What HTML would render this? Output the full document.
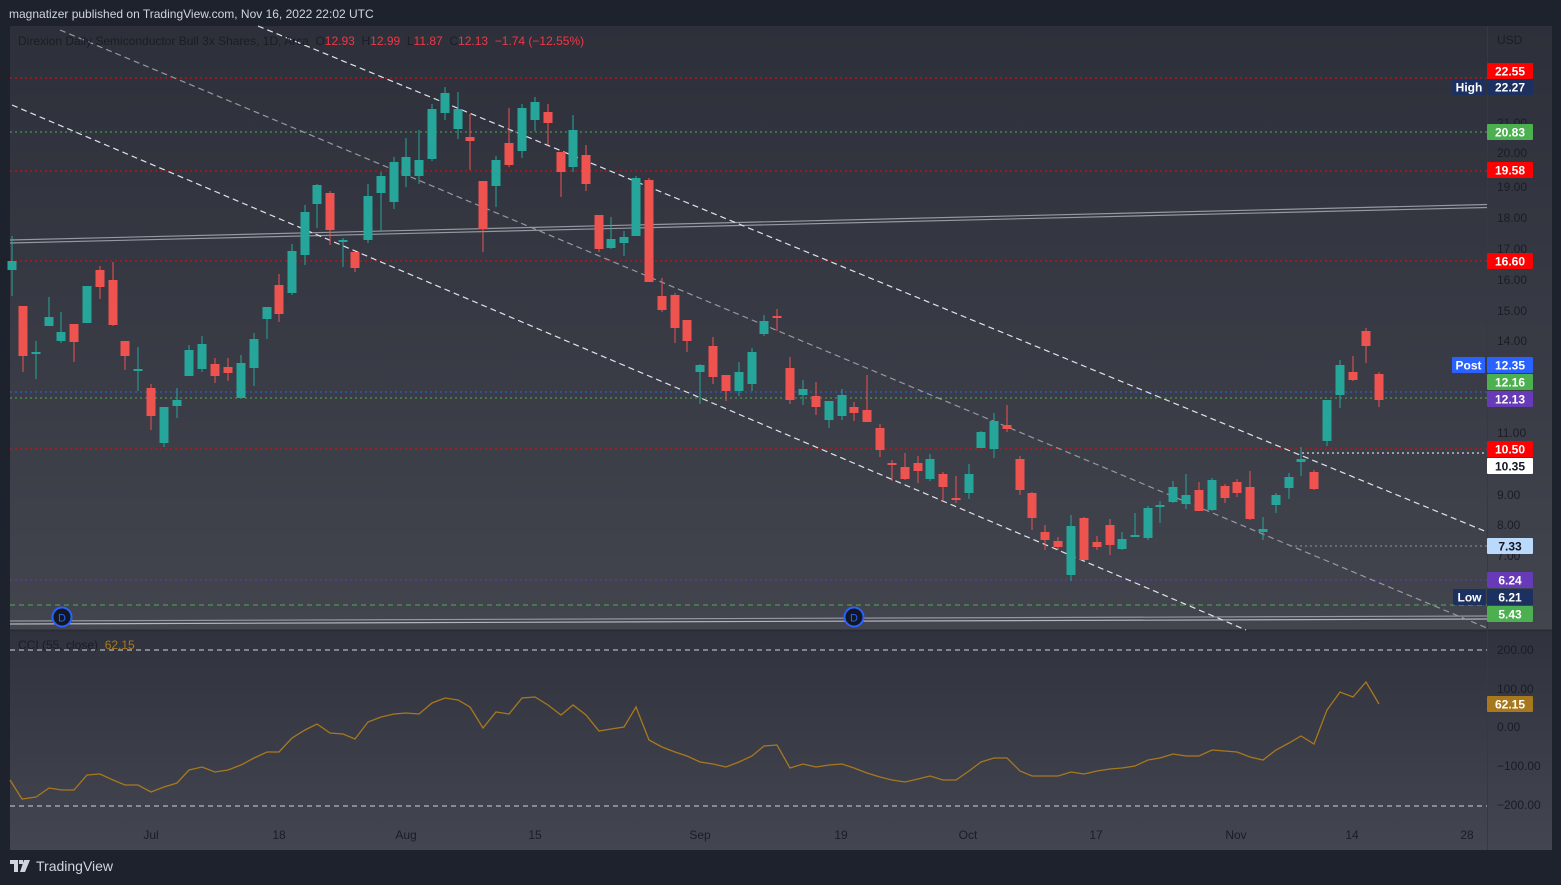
<!DOCTYPE html>
<html><head><meta charset="utf-8"><style>
*{margin:0;padding:0}
body{width:1561px;height:885px;background:#1e222d;overflow:hidden;font-family:"Liberation Sans",sans-serif;position:relative}
#hdr{position:absolute;left:9px;top:7px;color:#d1d4dc;font-size:12px}
#foot{position:absolute;left:10px;top:858px;color:#d1d4dc;font-size:14px;display:flex;align-items:center;gap:4px}
svg{position:absolute;left:0;top:0}
</style></head><body>
<div id="hdr">magnatizer published on TradingView.com, Nov 16, 2022 22:02 UTC</div>
<div id="foot"><svg style="position:static" width="22" height="12" viewBox="0 0 22 12"><path d="M0 0h8v12h-4V4H0z M9 0h4v4h-4z M14 0h6l-5 12h-5z" fill="#d1d4dc"/></svg>TradingView</div>
<svg id="c" width="1561" height="885" xmlns="http://www.w3.org/2000/svg">
<defs>
<linearGradient id="g1" x1="0" y1="0" x2="0" y2="1"><stop offset="0" stop-color="#2d303a"/><stop offset="1" stop-color="#42444e"/></linearGradient>
<linearGradient id="g2" x1="0" y1="0" x2="0" y2="1"><stop offset="0" stop-color="#30333d"/><stop offset="1" stop-color="#434550"/></linearGradient>
</defs>
<rect x="10" y="26" width="1542" height="605" fill="url(#g1)"/>
<rect x="10" y="631" width="1542" height="219" fill="url(#g2)"/>
<line x1="10" y1="630.5" x2="1552" y2="630.5" stroke="#2a2d36" stroke-width="2"/>
<line x1="1487.5" y1="26" x2="1487.5" y2="850" stroke="#363944" stroke-width="1"/>
<g id="lv"></g>
<g id="cd"></g>
<g id="lb" font-family="Liberation Sans,sans-serif" font-size="12"></g>
</svg>
<script>
const NS="http://www.w3.org/2000/svg";
function el(p,t,a,txt){const e=document.createElementNS(NS,t);for(const k in a)e.setAttribute(k,a[k]);if(txt!==undefined)e.textContent=txt;document.getElementById(p).appendChild(e);return e;}
[[78,'#f00',10,1487,'2 3'],[132,'#4caf50',10,1487,'2 3'],[171,'#f00',10,1487,'2 3'],[261,'#f00',10,1487,'2 3'],[392,'#2962ff',10,1487,'2 3'],[398,'#4caf50',10,1487,'2 3'],[449,'#f00',10,1487,'2 3'],[453,'#fff',1302,1487,'2 3'],[546,'#8a93a6',1290,1487,'2 3'],[580,'#673ab7',10,1487,'2 3'],[605,'#4caf50',10,1487,'5 4']].forEach(l=>el('lv','line',{x1:l[2],y1:l[0],x2:l[3],y2:l[0],stroke:l[1],'stroke-width':1,'stroke-dasharray':l[4]}));
el('lv','line',{x1:10,y1:240,x2:1487,y2:204.5,stroke:'#9598a1','stroke-width':1.2});
el('lv','line',{x1:10,y1:243,x2:1487,y2:207.5,stroke:'#9598a1','stroke-width':1.2});
el('lv','line',{x1:10,y1:621,x2:1487,y2:616,stroke:'#9598a1','stroke-width':1.2});
el('lv','line',{x1:10,y1:624,x2:1487,y2:619,stroke:'#b2b5be','stroke-width':1.2});
el('lv','line',{x1:258,y1:26,x2:1487,y2:532,stroke:'#e0e3eb','stroke-width':1.2,'stroke-dasharray':'6 4'});
el('lv','line',{x1:60,y1:30,x2:1487,y2:628,stroke:'#9598a1','stroke-width':1.2,'stroke-dasharray':'6 4'});
el('lv','line',{x1:12,y1:105,x2:1246,y2:630,stroke:'#e0e3eb','stroke-width':1.2,'stroke-dasharray':'6 4'});
const C=[[12,261,270,236,296,'g'],[23,306,356,306,372,'r'],[36,352,354,341,379,'g'],[49,317,326,297,326,'g'],[61,332,341,312,343,'g'],[74,324,342,324,362,'r'],[87,286,323,286,323,'g'],[100,270,287,266,299,'r'],[113,280,325,262,326,'r'],[125,341,356,341,370,'r'],[138,369,371,347,391,'g'],[151,388,416,384,430,'r'],[164,407,443,407,447,'g'],[177,400,406,388,418,'g'],[189,350,376,345,376,'g'],[202,344,369,336,372,'g'],[215,364,376,358,383,'r'],[228,367,373,358,381,'r'],[241,363,398,355,398,'g'],[254,339,368,333,386,'g'],[267,307,319,307,339,'g'],[279,285,314,274,322,'r'],[292,251,293,244,295,'g'],[305,212,255,205,265,'g'],[317,185,204,184,228,'g'],[330,193,230,191,245,'r'],[343,240,242,238,267,'g'],[355,252,268,252,272,'r'],
[368,196,240,184,243,'g'],[381,176,193,172,232,'g'],[394,162,202,157,209,'g'],[406,157,176,138,187,'g'],[419,160,176,130,184,'g'],[432,109,159,104,161,'g'],[445,93,113,87,120,'g'],[458,109,129,92,139,'g'],[470,137,141,114,170,'r'],[483,181,229,181,252,'r'],[496,160,186,156,207,'g'],[509,143,165,108,167,'r'],[522,108,151,104,158,'g'],[535,102,120,97,131,'g'],[548,112,123,104,145,'r'],[561,152,172,152,197,'r'],[573,130,167,115,172,'g'],[586,155,184,145,191,'r'],[599,215,249,215,252,'r'],[611,239,248,217,249,'g'],[624,237,243,231,256,'g'],[636,178,236,176,236,'g'],[649,180,282,178,282,'r'],[662,296,310,278,312,'r'],[675,295,328,293,343,'r'],[687,320,341,320,352,'r'],
[700,365,372,364,404,'g'],[713,346,377,337,384,'r'],[726,375,391,375,401,'r'],[739,372,391,362,396,'g'],[752,352,384,348,391,'g'],[764,321,334,315,336,'g'],[777,316,318,309,331,'r'],[790,368,400,357,404,'r'],[803,389,395,380,405,'g'],[816,396,407,382,415,'r'],[829,401,420,401,428,'g'],[842,395,416,389,420,'g'],[854,407,413,402,421,'r'],[867,410,422,375,422,'r'],[880,428,450,424,457,'r'],[892,463,464,460,481,'r'],[905,467,479,453,480,'r'],[918,463,471,456,483,'r'],[930,459,479,454,481,'g'],[943,474,487,472,501,'r'],[956,498,500,476,503,'r'],[969,474,493,464,499,'g'],[981,432,448,431,448,'g'],[994,421,449,413,458,'g'],[1007,425,429,405,432,'r'],[1020,459,490,456,495,'r'],[1032,493,518,492,530,'r'],[1045,532,540,525,550,'r'],
[1058,541,547,537,550,'r'],[1071,526,575,515,581,'g'],[1084,518,560,517,560,'r'],[1097,542,547,536,550,'r'],[1110,525,545,519,555,'r'],[1122,539,549,532,550,'g'],[1135,535,537,513,537,'g'],[1148,508,538,506,540,'g'],[1160,505,507,501,523,'g'],[1173,487,502,481,503,'g'],[1186,495,504,474,509,'g'],[1199,490,511,482,511,'r'],[1212,480,510,478,511,'g'],[1225,486,498,484,503,'r'],[1237,482,493,479,497,'r'],[1250,487,519,471,520,'r'],[1263,529,532,517,540,'g'],[1276,495,505,493,513,'g'],[1289,477,488,473,499,'g'],[1301,459,462,447,476,'g'],[1314,472,489,470,490,'r'],[1327,400,441,400,446,'g'],[1340,365,395,360,408,'g'],[1353,372,380,356,381,'r'],[1366,331,346,328,363,'r'],[1379,374,400,372,407,'r']];
C.forEach(c=>{const col=c[5]=='g'?'#26a69a':'#ef5350';el('cd','line',{x1:c[0],y1:c[3],x2:c[0],y2:c[4],stroke:col,'stroke-width':1});el('cd','rect',{x:c[0]-4.5,y:c[1],width:9,height:Math.max(2,c[2]-c[1]),fill:col});});
[62,854].forEach(x=>{el('cd','circle',{cx:x,cy:617,r:9.5,fill:'#131722',stroke:'#2962ff','stroke-width':2});el('lb','text',{x:x,y:621.5,'text-anchor':'middle',fill:'#2962ff','font-size':11},'D');});
el('cd','line',{x1:10,y1:650,x2:1487,y2:650,stroke:'#d1d4dc','stroke-width':1,'stroke-dasharray':'5 4'});
el('cd','line',{x1:10,y1:806,x2:1487,y2:806,stroke:'#d1d4dc','stroke-width':1,'stroke-dasharray':'5 4'});
const P=[[10,780],[22,799],[36,797],[49,788],[62,790],[74,790],[87,775],[100,774],[113,780],[125,785],[138,785],[151,792],[164,787],[177,783],[189,770],[202,767],[215,772],[228,770],[241,765],[254,758],[267,752],[279,752],[292,738],[305,730],[317,724],[330,733],[343,734],[355,739],[368,722],[381,717],[394,714],[406,713],[419,714],[432,703],[445,698],[458,700],[470,707],[483,728],[496,712],[509,714],[522,698],[535,697],[548,705],[561,715],[573,705],[586,715],[599,731],[611,729],[624,727],[636,707],[649,740],[662,747],[675,752],[687,756],[700,762],[713,764],[726,767],[739,762],[752,756],[764,746],[777,745],[790,768],[803,764],[816,767],[829,765],[842,764],[854,768],[867,773],[880,777],[892,780],[905,782],[918,779],[930,776],[943,780],[956,780],[969,771],[981,762],[994,758],[1007,758],[1020,771],[1032,776],[1045,776],[1058,776],[1071,772],[1084,774],[1097,771],[1110,769],[1122,768],[1135,766],[1148,760],[1160,758],[1173,754],[1186,756],[1199,756],[1212,750],[1225,751],[1237,752],[1250,757],[1263,760],[1276,750],[1289,743],[1301,736],[1314,744],[1327,710],[1340,692],[1353,697],[1366,682],[1379,704]];
el('cd','polyline',{points:P.map(p=>p.join(',')).join(' '),fill:'none',stroke:'#a8781e','stroke-width':1.3});
const AX='#1a1d26';
[['USD',44],['22.00',92],['21.00',127],['20.00',157],['19.00',191],['18.00',222],['17.00',253],['16.00',284],['15.00',315],['14.00',345],['11.00',437],['9.00',499],['8.00',529],['7.00',560],['200.00',654],['100.00',693],['0.00',731],['−100.00',770],['−200.00',809]].forEach(t=>el('lb','text',{x:1497,y:t[1],fill:AX},t[0]));
[['Jul',151],['18',279],['Aug',406],['15',535],['Sep',700],['19',841],['Oct',968],['17',1096],['Nov',1236],['14',1352],['28',1467]].forEach(t=>el('lb','text',{x:t[1],y:839,fill:AX,'text-anchor':'middle'},t[0]));
const h=el('lb','text',{x:18,y:45,fill:AX});
h.innerHTML='Direxion Daily Semiconductor Bull 3x Shares, 1D, Arca  O<tspan fill="#f23645">12.93</tspan>  H<tspan fill="#f23645">12.99</tspan>  L<tspan fill="#f23645">11.87</tspan>  C<tspan fill="#f23645">12.13  −1.74 (−12.55%)</tspan>';
h.style.whiteSpace='pre';
const h2=el('lb','text',{x:18,y:649,fill:AX});h2.innerHTML='CCI (55, close)  <tspan fill="#a8781e">62.15</tspan>';h2.style.whiteSpace='pre';
function lab(x,y,w,bg,fg,t){el('lb','rect',{x:x,y:y-8,width:w,height:16,fill:bg,rx:1});el('lb','text',{x:x+w/2,y:y+4.5,'text-anchor':'middle',fill:fg,'font-weight':'bold'},t);}
lab(1487,71,46,'#f00','#fff','22.55');lab(1452,87,34,'#1c3160','#fff','High');lab(1487,87,46,'#1c3160','#fff','22.27');
lab(1487,132,46,'#4caf50','#fff','20.83');lab(1487,170,46,'#f00','#fff','19.58');lab(1487,261,46,'#f00','#fff','16.60');
lab(1452,365,33,'#2962ff','#fff','Post');lab(1487,365,46,'#2962ff','#fff','12.35');lab(1487,382,46,'#4caf50','#fff','12.16');lab(1487,399,46,'#673ab7','#fff','12.13');
lab(1487,449,46,'#f00','#fff','10.50');lab(1487,466,46,'#fff','#131722','10.35');lab(1487,546,46,'#bbd9fb','#131722','7.33');
lab(1487,580,46,'#673ab7','#fff','6.24');lab(1453,597,33,'#1c3160','#fff','Low');lab(1487,597,46,'#1c3160','#fff','6.21');lab(1487,614,46,'#4caf50','#fff','5.43');
lab(1487,704,46,'#a8781e','#fff','62.15');
</script>
</body></html>
